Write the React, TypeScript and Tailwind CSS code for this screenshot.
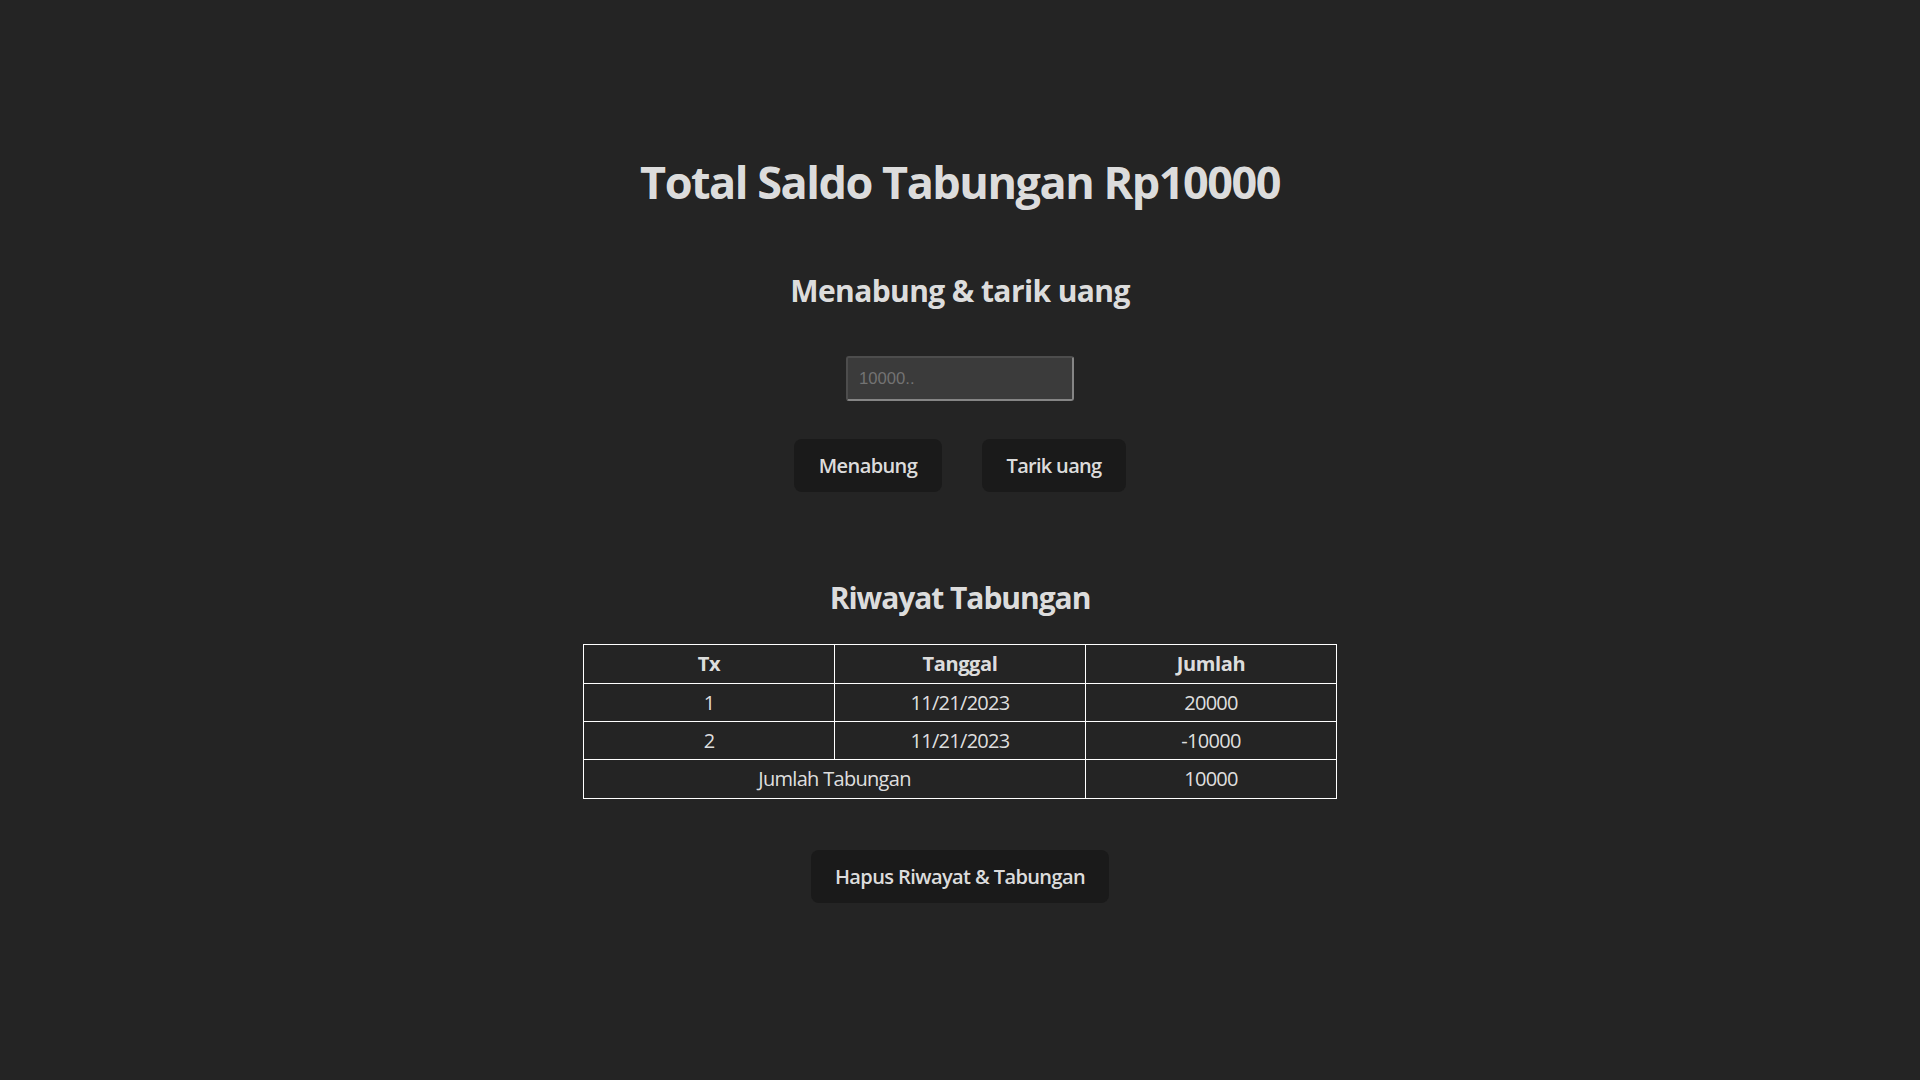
import { useState } from "react";

interface Transaksi {
    id: number;
    tanggal: string;
    jumlah: number;
}

const riwayat: Transaksi[] = [
    { id: 1, tanggal: "11/21/2023", jumlah: 20000 },
    { id: 2, tanggal: "11/21/2023", jumlah: -10000 },
];

export default function App() {
    const [nominal, setNominal] = useState("");
    const total = riwayat.reduce((acc, tx) => acc + tx.jumlah, 0);

    return (
        <div className="min-h-screen w-full bg-[#242424] text-white/87 font-['Open_Sans',sans-serif] flex flex-col items-center pt-[154px]">
            <h1 className="text-[45px] leading-[56px] font-bold tracking-[-0.033em]">Total Saldo Tabungan Rp{total}</h1>

            <h2 className="mt-[63px] text-[30px] leading-[36px] font-bold tracking-[-0.02em]">Menabung &amp; tarik uang</h2>

            <input
                type="number"
                value={nominal}
                onChange={(e) => setNominal(e.target.value)}
                placeholder="10000.."
                className="mt-[47px] w-[228px] h-[45px] px-[11px] bg-[#3b3b3b] border-2 border-t-[#4d4d4d] border-l-[#4d4d4d] border-r-[#858585] border-b-[#858585] rounded-[3px] text-[16.67px] font-['Liberation_Sans',sans-serif] text-white placeholder:text-[#737373] outline-none"
            />

            <div className="mt-[38px] flex gap-10">
                <button className="h-[53px] w-[148px] rounded-lg bg-[#1a1a1a] text-[20px] font-semibold tracking-[-0.03em]">Menabung</button>
                <button className="h-[53px] w-[144px] rounded-lg bg-[#1a1a1a] text-[20px] font-semibold tracking-[-0.035em]">Tarik uang</button>
            </div>

            <h2 className="mt-[88px] text-[30px] leading-[36px] font-bold tracking-[-0.035em]">Riwayat Tabungan</h2>

            <table className="mt-[28px] w-[754px] table-fixed border-collapse text-[20px] text-center tracking-[-0.035em]">
                <thead>
                    <tr className="h-[39px]">
                        <th className="border border-white font-bold tracking-[-0.02em]">Tx</th>
                        <th className="border border-white font-bold tracking-[-0.02em]">Tanggal</th>
                        <th className="border border-white font-bold tracking-[-0.02em]">Jumlah</th>
                    </tr>
                </thead>
                <tbody>
                    {riwayat.map((tx) => (
                        <tr key={tx.id} className="h-[38px]">
                            <td className="border border-white">{tx.id}</td>
                            <td className="border border-white">{tx.tanggal}</td>
                            <td className="border border-white">{tx.jumlah}</td>
                        </tr>
                    ))}
                    <tr className="h-[39px]">
                        <td colSpan={2} className="border border-white">Jumlah Tabungan</td>
                        <td className="border border-white">{total}</td>
                    </tr>
                </tbody>
            </table>

            <button className="mt-[51px] h-[53px] w-[298px] rounded-lg bg-[#1a1a1a] text-[20px] font-semibold tracking-[-0.03em]">
                Hapus Riwayat &amp; Tabungan
            </button>
        </div>
    );
}
